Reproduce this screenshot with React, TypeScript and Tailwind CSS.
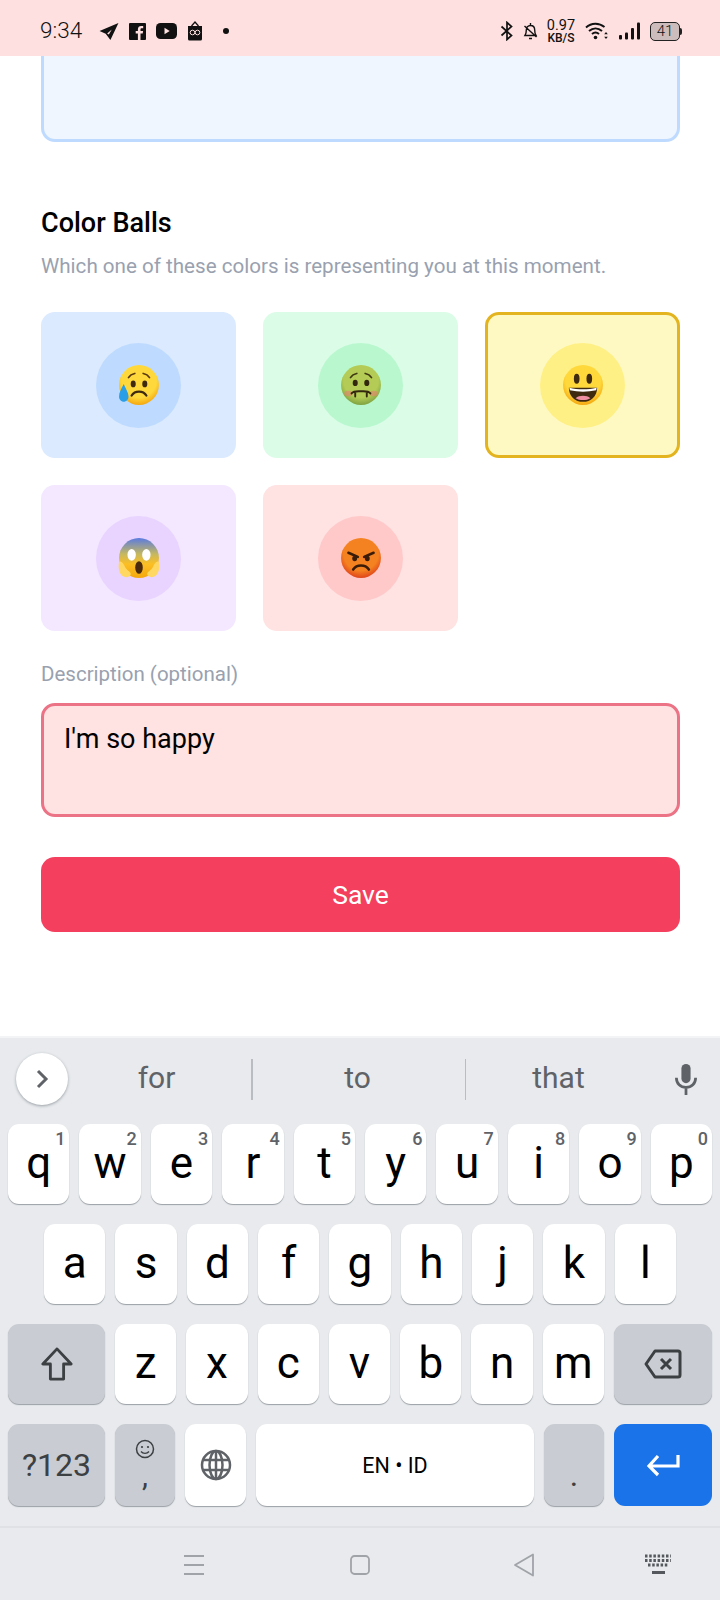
import React from 'react';

const FONT = 'font-["Roboto",sans-serif]';

const FaceBase = ({ id, top = '#FFD93B', bottom = '#F5A70F', children }: { id: string; top?: string; bottom?: string; children?: React.ReactNode }) => (
  <svg width="42" height="42" viewBox="0 0 40 40">
    <defs>
      <radialGradient id={id} cx="50%" cy="38%" r="62%">
        <stop offset="0%" stopColor={top} />
        <stop offset="70%" stopColor={top} />
        <stop offset="100%" stopColor={bottom} />
      </radialGradient>
    </defs>
    <circle cx="20" cy="20" r="19" fill={`url(#${id})`} />
    {children}
  </svg>
);

const SadFace = () => (
  <FaceBase id="sad">
    <path d="M10 13c1.500-2.500 3.500-3.500 6-4M30 13c-1.500-2.500-3.500-3.500-6-4" stroke="#5b3a12" strokeWidth="1.600" fill="none" strokeLinecap="round" />
    <ellipse cx="14.500" cy="19" rx="2.400" ry="3.200" fill="#3f2a10" />
    <ellipse cx="25.500" cy="19" rx="2.400" ry="3.200" fill="#3f2a10" />
    <path d="M13 30c3-5 11-5 14 0" stroke="#3f2a10" strokeWidth="2.200" fill="none" strokeLinecap="round" />
    <path d="M5.500 19C3 24 1 27 1 31c0 3 2.200 5 4.500 5S10 34 10 31c0-4-2.500-7-4.500-12z" fill="#2A9FE8" />
  </FaceBase>
);

const SickFace = () => (
  <FaceBase id="sick" top="#B4CC55" bottom="#7FA341">
    <path d="M10 13c1.500-2.500 3.500-3.500 6-4M30 13c-1.500-2.500-3.500-3.500-6-4" stroke="#3f3a14" strokeWidth="1.600" fill="none" strokeLinecap="round" />
    <ellipse cx="14.500" cy="18" rx="2.400" ry="3" fill="#33280e" />
    <ellipse cx="25.500" cy="18" rx="2.400" ry="3" fill="#33280e" />
    <ellipse cx="8" cy="28" rx="4" ry="2.600" fill="#D98A6A" opacity="0.700" />
    <ellipse cx="32" cy="28" rx="4" ry="2.600" fill="#D98A6A" opacity="0.700" />
    <path d="M11 28c2-2.500 5-2 9-2s7-.5 9 2M14.500 27v4M25.500 27v4" stroke="#33280e" strokeWidth="1.800" fill="none" strokeLinecap="round" />
  </FaceBase>
);

const HappyFace = () => (
  <FaceBase id="happy">
    <ellipse cx="14" cy="14" rx="2.700" ry="4.700" fill="#3f2a10" />
    <ellipse cx="26" cy="14" rx="2.700" ry="4.700" fill="#3f2a10" />
    <path d="M6.500 22.500h27c0 8-6 13.500-13.500 13.500S6.500 30.500 6.500 22.500z" fill="#3f2a10" />
    <path d="M7 22.500c8 2 18 2 26 0l-.5 2.500c-8 1.800-17 1.800-25 0z" fill="#fff" />
    <path d="M13 32.500c3.500-3 10.500-3 14 0-3.500 2.500-10.500 2.500-14 0z" fill="#EF8FA0" />
  </FaceBase>
);

const ScaredFace = () => (
  <svg width="42" height="42" viewBox="0 0 40 40">
    <defs>
      <linearGradient id="scared" x1="0" y1="0" x2="0" y2="1">
        <stop offset="0%" stopColor="#5B7BE0" />
        <stop offset="40%" stopColor="#C5B860" />
        <stop offset="65%" stopColor="#FBBF24" />
        <stop offset="100%" stopColor="#F5A70F" />
      </linearGradient>
    </defs>
    <circle cx="20" cy="20" r="19" fill="url(#scared)" />
    <ellipse cx="13" cy="17" rx="4" ry="5.500" fill="#fff" />
    <ellipse cx="27" cy="17" rx="4" ry="5.500" fill="#fff" />
    <ellipse cx="20" cy="29" rx="3.600" ry="6" fill="#4a2a0c" />
    <path d="M1 24c2-2 4 1 6 5 1.500 3 6 4 5 7-1 2.500-5 3-8 1C1 34 0 29 1 24z" fill="#FFD863" />
    <path d="M39 24c-2-2-4 1-6 5-1.500 3-6 4-5 7 1 2.500 5 3 8 1 3-3 4-8 3-13z" fill="#FFD863" />
  </svg>
);

const AngryFace = () => (
  <FaceBase id="angry" top="#F58220" bottom="#E0451A">
    <path d="M8 15l9 4M32 15l-9 4" stroke="#3a1c08" strokeWidth="2.400" strokeLinecap="round" />
    <ellipse cx="14" cy="20.500" rx="2.300" ry="2.600" fill="#3a1c08" />
    <ellipse cx="26" cy="20.500" rx="2.300" ry="2.600" fill="#3a1c08" />
    <path d="M12.500 31c3.500-5 11.500-5 15 0" stroke="#3a1c08" strokeWidth="2.400" fill="none" strokeLinecap="round" />
  </FaceBase>
);

const moods = [
  { card: 'bg-blue-100', ball: 'bg-blue-200', face: <SadFace /> },
  { card: 'bg-green-100', ball: 'bg-green-200', face: <SickFace /> },
  { card: 'bg-yellow-100 border-[3px] border-[#e3b41f]', ball: 'bg-yellow-200', face: <HappyFace /> },
  { card: 'bg-purple-100', ball: 'bg-purple-200', face: <ScaredFace /> },
  { card: 'bg-red-100', ball: 'bg-red-200', face: <AngryFace /> },
];

const StatusBar = () => (
  <div className="h-14 shrink-0 bg-[#fee0e0] flex items-center pt-[6px] pl-[40px] pr-[38px] text-[#111]">
    <span className={`w-[44px] text-[22.500px] font-light ${FONT}`}>9:34</span>
    {/* notification icons */}
    <svg className="ml-[15px]" width="20" height="17" viewBox="0 0 20 18"><path d="M20 0L0 8.500l6.500 3L11.500 18z" fill="#111" /><path d="M8 11l5-4-3.200 5.200z" fill="#fee0e0" /></svg>
    <svg className="ml-[10px]" width="17" height="17" viewBox="0 0 17 17"><rect width="17" height="17" fill="#111" rx="1" /><path d="M11.500 17v-6.500h2.200l.4-2.500h-2.600V6.500c0-.8.3-1.300 1.400-1.300h1.300V3c-.3 0-1.100-.1-2-.1-2 0-3.300 1.200-3.300 3.400V8H6.700v2.500h2.200V17z" fill="#fee0e0" /></svg>
    <svg className="ml-[10px]" width="21" height="16" viewBox="0 0 21 16"><rect width="21" height="16" rx="4.500" fill="#111" /><path d="M8.500 4.800v6.400l5.200-3.200z" fill="#fee0e0" /></svg>
    <svg className="ml-[10px]" width="16" height="20" viewBox="0 0 16 20"><path d="M1 5h14v13a1.500 1.500 0 01-1.500 1.500h-11A1.500 1.500 0 011 18z" fill="#111" /><path d="M4.500 5L8 1l3.500 4" stroke="#111" strokeWidth="1.300" fill="none" /><circle cx="5.500" cy="11.500" r="2.300" fill="none" stroke="#fee0e0" strokeWidth="1" /><circle cx="10.500" cy="11.500" r="2.300" fill="none" stroke="#fee0e0" strokeWidth="1" /></svg>
    <span className="ml-[20px] w-[6px] h-[6px] rounded-full bg-[#111]" />
    <div className="ml-auto flex items-center">
      <svg width="14" height="20" viewBox="0 0 14 20"><path d="M1.500 5.500l10 9L7 18.500v-17l4.500 4-10 9" stroke="#111" strokeWidth="1.700" fill="none" /></svg>
      <svg className="ml-[8px]" width="17" height="20" viewBox="0 0 17 20"><path d="M3 14.500c1-1.500 1.300-3 1.300-5.500 0-2.500 1.600-4.500 4.200-4.500s4.200 2 4.200 4.500c0 2.500.3 4 1.300 5.500zM7 17.500h3M8.500 2v2M2.500 5l12 11" stroke="#111" strokeWidth="1.400" fill="none" /></svg>
      <div className={`ml-[7px] w-[30px] flex flex-col items-center ${FONT} text-[#111]`}>
        <span className="text-[14.500px] leading-[11px]">0.97</span>
        <span className="text-[12px] leading-[9px] mt-[3px] font-medium">KB/S</span>
      </div>
      <svg className="ml-[9px]" width="24" height="20" viewBox="0 0 24 20"><path d="M1 6.500C6.500 1.500 14 1.500 19.500 6M4 10c4-3.500 9-3.500 13 0M7 13c2.200-2 4.800-2 7 0" stroke="#111" strokeWidth="1.900" fill="none" /><circle cx="10.500" cy="16.500" r="1.800" fill="#111" /><path d="M21 11l-1.800 2.200h3.600zM21 18l-1.800-2.200h3.600z" fill="#111" /></svg>
      <svg className="ml-[9px]" width="22" height="20" viewBox="0 0 22 20"><rect x="1" y="14" width="3" height="4.500" rx="1" fill="#111" /><rect x="7" y="11.500" width="3" height="7" rx="1" fill="#111" /><rect x="13" y="7" width="3" height="11.500" rx="1" fill="#111" /><rect x="19" y="1.500" width="3" height="17" rx="1" fill="#111" /></svg>
      <div className="ml-[10px] flex items-center">
        <div className={`w-[30px] h-[19px] rounded-[5px] border-[1.500px] border-[#222] bg-[#cdbcbc] flex items-center justify-center text-[15px] leading-none font-light text-[#111] ${FONT}`}>41</div>
        <span className="w-[2px] h-[7px] bg-[#222] rounded-r-full" />
      </div>
    </div>
  </div>
);

const Key = ({ label, hint }: { label: string; hint?: string }) => (
  <div className="relative flex-1 h-20 bg-white rounded-[11px] shadow-[0_1px_1px_#9aa0a6] flex items-center justify-center pb-[3px]">
    <span className="text-[44px] leading-none text-black">{label}</span>
    {hint && <span className="absolute top-[6px] right-[4px] text-[18px] leading-[18px] font-medium text-[#5f6368]">{hint}</span>}
  </div>
);

const DarkKey = ({ className, children }: { className: string; children: React.ReactNode }) => (
  <div className={`bg-[#c9ccd2] rounded-[11px] shadow-[0_1px_1px_#9aa0a6] flex items-center justify-center ${className}`}>{children}</div>
);

const Keyboard = () => (
  <div className={`h-[562px] shrink-0 bg-[#e8eaed] flex flex-col ${FONT}`}>
    {/* suggestion strip */}
    <div className="h-[86px] flex items-center pl-4 pr-[18px] pb-[4px] text-[#5f6368] text-[30px]">
      <div className="w-[52px] h-[52px] rounded-full bg-white shadow-[0_1px_3px_#9aa0a6] flex items-center justify-center">
        <svg width="18" height="22" viewBox="0 0 18 22"><path d="M5 3l8 8-8 8" stroke="#5f6368" strokeWidth="3" fill="none" /></svg>
      </div>
      <div className="w-[183px] text-center pr-[6px] pb-[4px]">for</div>
      <div className="w-[1.500px] h-[41px] bg-[#b9bcc1]" />
      <div className="w-[212px] text-center pr-[2px] pb-[4px]">to</div>
      <div className="w-[1.500px] h-[41px] bg-[#b9bcc1]" />
      <div className="w-[187px] text-center pr-[2px] pb-[4px]">that</div>
      <svg className="ml-[20px]" width="26" height="33" viewBox="0 0 26 36"><rect x="8" y="1" width="10" height="21" rx="5" fill="#5f6368" /><path d="M2.500 16c0 6.500 4.500 10.500 10.500 10.500S23.500 22.500 23.500 16M13 26.500V35" stroke="#5f6368" strokeWidth="3" fill="none" /></svg>
    </div>
    <div className="flex flex-col gap-5 px-2">
      <div className="flex gap-[10px]">
        {[['q', '1'], ['w', '2'], ['e', '3'], ['r', '4'], ['t', '5'], ['y', '6'], ['u', '7'], ['i', '8'], ['o', '9'], ['p', '0']].map(([k, n]) => (
          <Key key={k} label={k} hint={n} />
        ))}
      </div>
      <div className="flex gap-[10px] px-[36px]">
        {['a', 's', 'd', 'f', 'g', 'h', 'j', 'k', 'l'].map((k) => <Key key={k} label={k} />)}
      </div>
      <div className="flex gap-[10px]">
        <DarkKey className="w-[97px] h-20">
          <svg width="34" height="34" viewBox="0 0 36 36"><path d="M18 2L3 18h8v16h14V18h8z" stroke="#3c4043" strokeWidth="3" fill="none" strokeLinejoin="round" /></svg>
        </DarkKey>
        {['z', 'x', 'c', 'v', 'b', 'n', 'm'].map((k) => <Key key={k} label={k} />)}
        <DarkKey className="w-[98px] h-20">
          <svg width="38" height="30" viewBox="0 0 38 30"><path d="M11 2h23a2 2 0 012 2v22a2 2 0 01-2 2H11L2 15z" stroke="#3c4043" strokeWidth="3" fill="none" strokeLinejoin="round" /><path d="M17 10l10 10M27 10L17 20" stroke="#3c4043" strokeWidth="3" /></svg>
        </DarkKey>
      </div>
      <div className="flex gap-[10px] h-[82px]">
        <DarkKey className="w-[97px]"><span className="text-[32px] text-[#3c4043]">?123</span></DarkKey>
        <DarkKey className="w-[60px] flex-col">
          <svg width="20" height="20" viewBox="0 0 20 20"><circle cx="10" cy="10" r="8.500" stroke="#3c4043" strokeWidth="1.500" fill="none" /><circle cx="7" cy="8" r="1.100" fill="#3c4043" /><circle cx="13" cy="8" r="1.100" fill="#3c4043" /><path d="M6 12.500c2 2.500 6 2.500 8 0" stroke="#3c4043" strokeWidth="1.400" fill="none" /></svg>
          <span className="text-[30px] leading-[30px] text-[#3c4043] mt-[2px]">,</span>
        </DarkKey>
        <div className="w-[61px] bg-white rounded-[11px] shadow-[0_1px_1px_#9aa0a6] flex items-center justify-center">
          <svg width="32" height="32" viewBox="0 0 32 32" fill="none" stroke="#5f6368" strokeWidth="2.500"><circle cx="16" cy="16" r="14" /><ellipse cx="16" cy="16" rx="6.500" ry="14" /><path d="M16 2v28M3 11h26M3 21h26" /></svg>
        </div>
        <div className="flex-1 bg-white rounded-[11px] shadow-[0_1px_1px_#9aa0a6] flex items-center justify-center text-[21.500px] pt-[3px] text-black">EN • ID</div>
        <DarkKey className="w-[60px]"><span className="text-[32px] leading-none text-[#3c4043] mt-[20px]">.</span></DarkKey>
        <div className="w-[98px] bg-[#1a73e8] rounded-[11px] flex items-center justify-center">
          <svg width="34" height="26" viewBox="0 0 34 26" fill="none" stroke="#fff" strokeWidth="3.200"><path d="M32 3v11H4M12 4L3 14l9 9" /></svg>
        </div>
      </div>
    </div>
    {/* nav bar */}
    <div className="mt-5 flex-1 border-t-2 border-[#dfe1e5] flex items-center pt-[2px]">
      <svg className="ml-[183px]" width="22" height="22" viewBox="0 0 22 22" fill="none" stroke="#a0a3a8" strokeWidth="1.800"><path d="M1 2h20M1 11h20M1 20h20" /></svg>
      <svg className="ml-[144px]" width="22" height="22" viewBox="0 0 22 22" fill="none" stroke="#a0a3a8" strokeWidth="1.800"><rect x="2" y="2" width="18" height="18" rx="3.500" /></svg>
      <svg className="ml-[141px]" width="24" height="24" viewBox="0 0 24 24" fill="none" stroke="#a0a3a8" strokeWidth="1.800" strokeLinejoin="round"><path d="M21 1.500v21L3 12z" /></svg>
      <svg className="ml-[108px]" width="28" height="22" viewBox="0 0 28 22"><path d="M1 2h26M1 6.500h26M4 11h20" stroke="#55585c" strokeWidth="3" strokeDasharray="2.500 1.700" /><rect x="8" y="17" width="13" height="3" fill="#55585c" /></svg>
    </div>
  </div>
);

const App: React.FC = () => {
  return (
    <div className={`w-[720px] h-[1600px] bg-white flex flex-col overflow-hidden ${FONT}`}>
      <StatusBar />
      <main className="flex-1 pl-[41px] pr-[40px] min-h-0">
        {/* previous field, scrolled under the status bar */}
        <div className="h-[86px] bg-blue-50 border-[3px] border-t-0 border-blue-200 rounded-b-[14px]" />

        <h2 className="mt-[65px] text-[27px] leading-8 font-medium text-black">Color Balls</h2>
        <p className="mt-[13px] text-[20.600px] leading-7 text-gray-400">Which one of these colors is representing you at this moment.</p>

        <div className="mt-[32px] grid grid-cols-3 gap-[27px]">
          {moods.map((m, i) => (
            <div key={i} className={`h-[146px] rounded-[14px] flex items-center justify-center ${m.card}`}>
              <div className={`w-[85px] h-[85px] rounded-full flex items-center justify-center ${m.ball}`}>{m.face}</div>
            </div>
          ))}
        </div>

        <div className="mt-[31px] text-[20.500px] leading-6 text-gray-400">Description (optional)</div>
        <div className="mt-[17px] h-[114px] bg-red-100 border-[3px] border-[#ec7285] rounded-[14px] px-[20px] py-[15px] text-[27px] leading-9 text-black">I'm so happy</div>

        <button className="mt-[40px] w-full h-[75px] rounded-[14px] bg-[#f43f5e] text-white text-[26.500px]">Save</button>
      </main>
      <div className="h-[2px] bg-[#f3f4f6]" />
      <Keyboard />
    </div>
  );
};

export default App;
